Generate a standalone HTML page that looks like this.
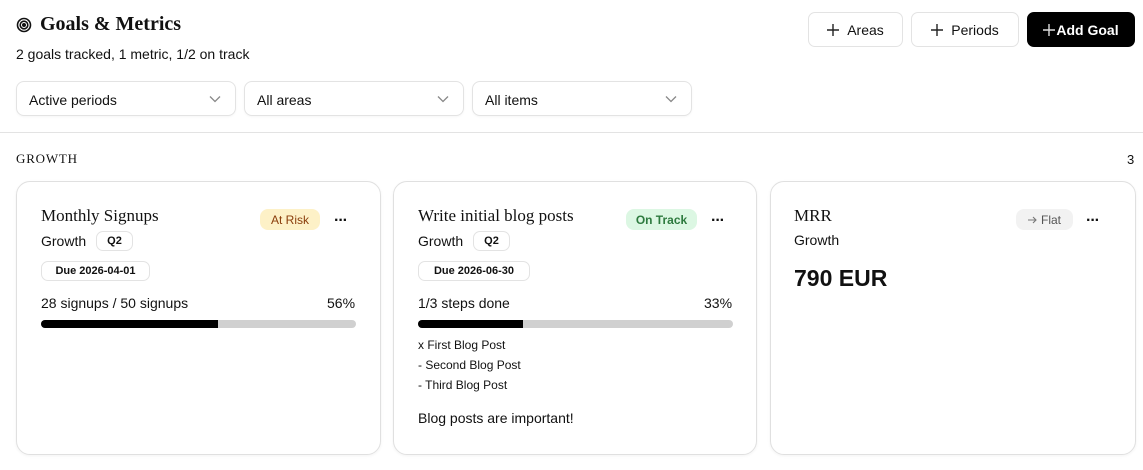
<!DOCTYPE html>
<html><head><meta charset="utf-8"><style>
*{box-sizing:border-box;margin:0;padding:0}
body{width:1143px;height:470px;background:#fff;font-family:"Liberation Sans",sans-serif;color:#111;position:relative;overflow:hidden}
.a{position:absolute;white-space:nowrap}
.serif{font-family:"Liberation Serif",serif}
.dd{position:absolute;top:81px;height:35px;border:1px solid #e3e3e3;border-radius:8px;font-size:14px;padding:10px 12px;box-shadow:0 1px 2px rgba(0,0,0,.04)}
.dd svg{position:absolute;right:14px;top:13px}
.btn{position:absolute;top:12px;height:35px;border:1px solid #e3e3e3;border-radius:7px;font-size:14px;display:flex;align-items:center;justify-content:center;gap:8px}
.card{position:absolute;top:181px;height:274px;border:1px solid #e0e0e0;border-radius:14px;box-shadow:0 1px 3px rgba(0,0,0,.05)}
.chip{position:absolute;border:1px solid #e3e3e3;border-radius:7px;font-size:11px;font-weight:bold;display:flex;align-items:center;justify-content:center;height:20px}
.badge{position:absolute;top:209px;height:21px;border-radius:8px;font-size:12px;display:flex;align-items:center;justify-content:center}
.dots{position:absolute;top:212px;font-size:16px;font-weight:bold;letter-spacing:-1px}
.bar{position:absolute;top:320px;height:8px;background:#d0d0d0;border-radius:4px;overflow:hidden}
.bar i{display:block;height:100%;background:#000}
</style></head><body>
<svg class="a" style="left:16px;top:17px" width="16" height="16" viewBox="0 0 16 16" fill="none" stroke="#111" stroke-width="1.6"><circle cx="8" cy="8" r="6.5"/><circle cx="8" cy="8" r="3.8"/><circle cx="8" cy="8" r="1.2" fill="#111"/></svg>
<div class="a serif" style="left:40px;top:13px;font-size:20px;font-weight:bold">Goals &amp; Metrics</div>
<div class="a" style="left:16px;top:46px;font-size:14px">2 goals tracked, 1 metric, 1/2 on track</div>

<div class="dd" style="left:16px;width:220px">Active periods<svg width="12" height="8" viewBox="0 0 12 8" fill="none" stroke="#888" stroke-width="1.3"><path d="M1 1.5l5 5 5-5"/></svg></div>
<div class="dd" style="left:244px;width:220px">All areas<svg width="12" height="8" viewBox="0 0 12 8" fill="none" stroke="#888" stroke-width="1.3"><path d="M1 1.5l5 5 5-5"/></svg></div>
<div class="dd" style="left:472px;width:220px">All items<svg width="12" height="8" viewBox="0 0 12 8" fill="none" stroke="#888" stroke-width="1.3"><path d="M1 1.5l5 5 5-5"/></svg></div>

<div class="btn" style="left:808px;width:95px"><svg width="12" height="12" viewBox="0 0 12 12" stroke="#222" stroke-width="1.4"><path d="M6 0v12M0 6h12"/></svg>Areas</div>
<div class="btn" style="left:911px;width:108px"><svg width="12" height="12" viewBox="0 0 12 12" stroke="#222" stroke-width="1.4"><path d="M6 0v12M0 6h12"/></svg>Periods</div>
<div class="btn" style="left:1027px;width:108px;background:#000;border-color:#000;color:#fff;font-weight:bold;gap:1px"><svg width="12" height="12" viewBox="0 0 12 12" stroke="#ddd" stroke-width="1.4"><path d="M6 0v12M0 6h12"/></svg>Add Goal</div>

<div class="a" style="left:0;top:132px;width:1143px;height:1px;background:#e3e3e3"></div>
<div class="a serif" style="left:16px;top:151px;font-size:13px;letter-spacing:.8px">GROWTH</div>
<div class="a" style="left:1127px;top:152px;font-size:13px">3</div>

<div class="card" style="left:16px;width:365px"></div>
<div class="card" style="left:393px;width:364px"></div>
<div class="card" style="left:770px;width:366px"></div>

<!-- card1 -->
<div class="a serif" style="left:41px;top:206px;font-size:17px">Monthly Signups</div>
<div class="badge" style="left:260px;width:60px;background:#fdf1c7;color:#8a3d0b">At Risk</div>
<div class="dots" style="left:334px">···</div>
<div class="a" style="left:41px;top:233px;font-size:14px">Growth</div>
<div class="chip" style="left:96px;top:231px;width:37px">Q2</div>
<div class="chip" style="left:41px;top:261px;width:109px">Due 2026-04-01</div>
<div class="a" style="left:41px;top:295px;font-size:14px">28 signups / 50 signups</div>
<div class="a" style="left:327px;top:295px;font-size:14px">56%</div>
<div class="bar" style="left:41px;width:315px"><i style="width:177px"></i></div>

<!-- card2 -->
<div class="a serif" style="left:418px;top:206px;font-size:17px">Write initial blog posts</div>
<div class="badge" style="left:626px;width:71px;background:#dcf7e3;color:#2d7a3e;font-weight:bold">On Track</div>
<div class="dots" style="left:711px">···</div>
<div class="a" style="left:418px;top:233px;font-size:14px">Growth</div>
<div class="chip" style="left:473px;top:231px;width:37px">Q2</div>
<div class="chip" style="left:418px;top:261px;width:112px">Due 2026-06-30</div>
<div class="a" style="left:418px;top:295px;font-size:14px">1/3 steps done</div>
<div class="a" style="left:704px;top:295px;font-size:14px">33%</div>
<div class="bar" style="left:418px;width:315px"><i style="width:105px"></i></div>
<div class="a" style="left:418px;top:335px;font-size:12px;line-height:20px">x First Blog Post<br>- Second Blog Post<br>- Third Blog Post</div>
<div class="a" style="left:418px;top:410px;font-size:14px">Blog posts are important!</div>

<!-- card3 -->
<div class="a serif" style="left:794px;top:206px;font-size:17px">MRR</div>
<div class="badge" style="left:1016px;width:57px;background:#f2f2f2;color:#555;font-size:12px;gap:4px"><svg width="9" height="8" viewBox="0 0 9 8" fill="none" stroke="#777" stroke-width="1.1"><path d="M0 4h8M5 1l3 3-3 3"/></svg>Flat</div>
<div class="dots" style="left:1086px">···</div>
<div class="a" style="left:794px;top:232px;font-size:14px">Growth</div>
<div class="a" style="left:794px;top:265px;font-size:23px;font-weight:bold">790 EUR</div>
</body></html>
